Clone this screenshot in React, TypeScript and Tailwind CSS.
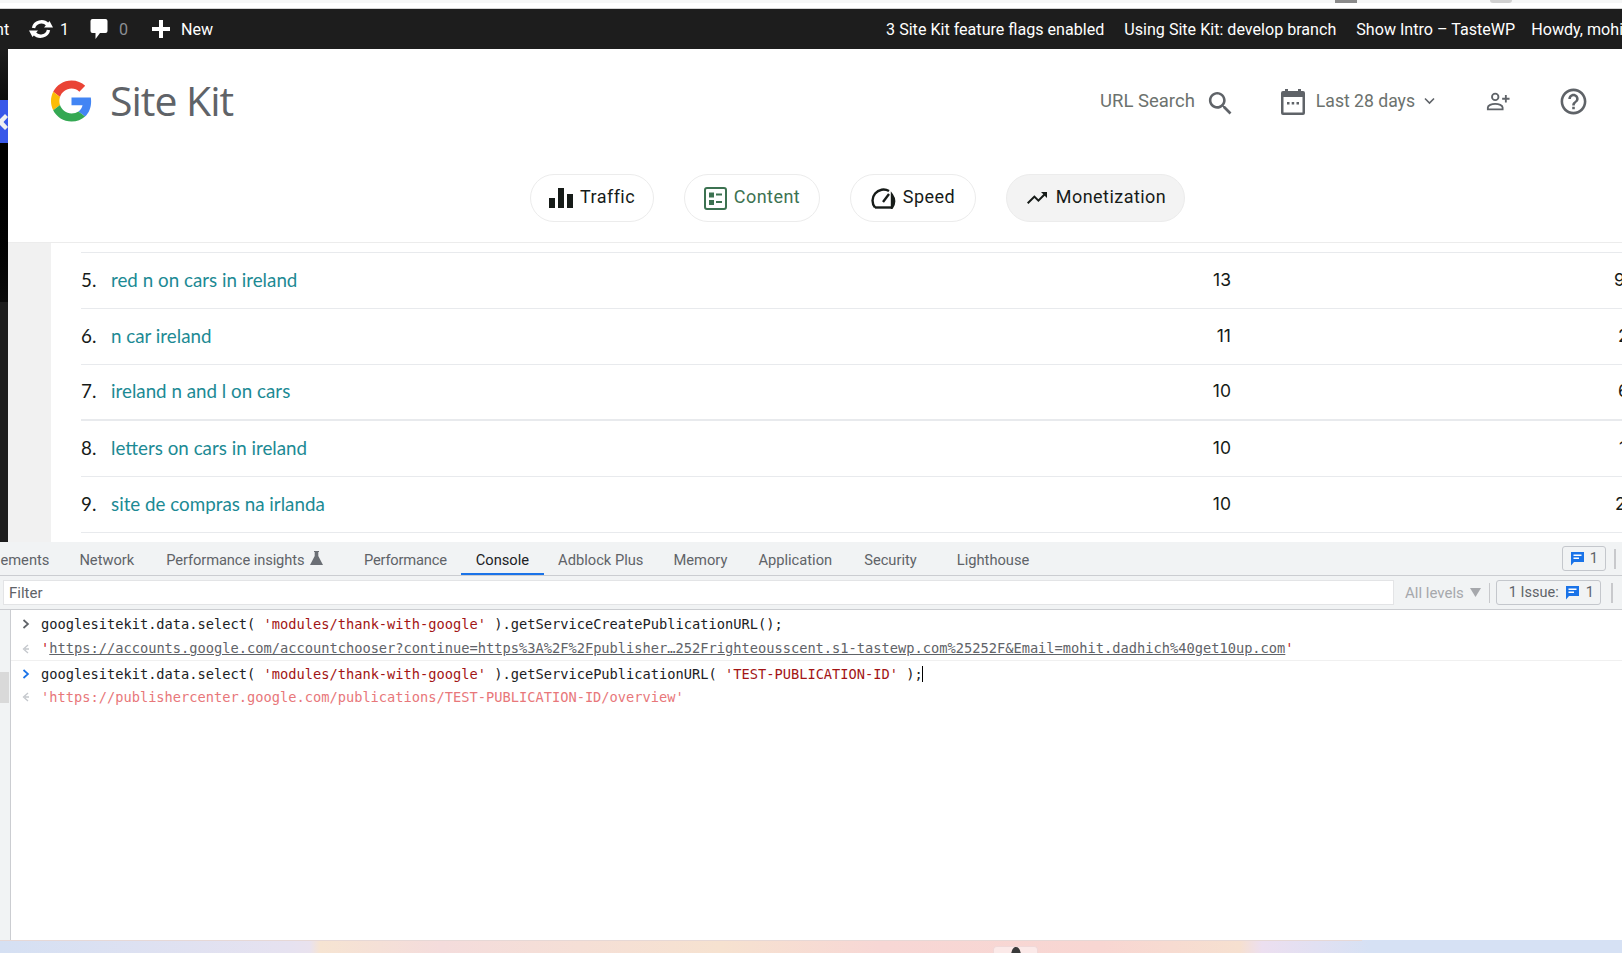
const rows = [
  { n: '5.', label: 'red n on cars in ireland', clicks: '13', extra: '9', offset: 'pl-[383px]', line: 'border-b' },
  { n: '6.', label: 'n car ireland', clicks: '11', extra: '2', offset: 'pl-[387px]', line: 'border-b' },
  { n: '7.', label: 'ireland n and l on cars', clicks: '10', extra: '6', offset: 'pl-[387px]', line: 'border-b-2' },
  { n: '8.', label: 'letters on cars in ireland', clicks: '10', extra: '1', offset: 'pl-[388px]', line: 'border-b' },
  { n: '9.', label: 'site de compras na irlanda', clicks: '10', extra: '2', offset: 'pl-[384px]', line: 'border-b' },
];

const GoogleG = () => (
  <svg width="41" height="42" viewBox="0 0 48 48">
    <path fill="#EA4335" d="M24 9.5c3.54 0 6.71 1.22 9.21 3.6l6.85-6.85C35.9 2.38 30.47 0 24 0 14.62 0 6.51 5.38 2.56 13.22l7.98 6.19C12.43 13.72 17.74 9.5 24 9.5z" />
    <path fill="#4285F4" d="M46.98 24.55c0-1.57-.15-3.09-.38-4.55H24v9.02h12.94c-.58 2.96-2.26 5.48-4.78 7.18l7.73 6c4.51-4.18 7.09-10.36 7.09-17.65z" />
    <path fill="#FBBC05" d="M10.53 28.59c-.48-1.45-.76-2.99-.76-4.59s.27-3.14.76-4.59l-7.98-6.19C.92 16.46 0 20.12 0 24c0 3.88.92 7.54 2.56 10.78l7.97-6.19z" />
    <path fill="#34A853" d="M24 48c6.48 0 11.93-2.13 15.89-5.81l-7.73-6c-2.15 1.45-4.92 2.3-8.16 2.3-6.26 0-11.57-4.22-13.47-9.91l-7.98 6.19C6.51 42.62 14.62 48 24 48z" />
  </svg>
);

const MessageIcon = () => (
  <svg width="15" height="15" viewBox="0 0 15 15">
    <path fill="#1a73e8" d="M1 1h13v10H4l-3 3.5z" />
    <path fill="#fff" d="M3.5 3.5h8v1.4h-8zM3.5 6.5h5.5v1.4H3.5z" />
  </svg>
);

const Chevron = ({ color }: { color: string }) => (
  <svg width="8" height="10" viewBox="0 0 8 10" fill="none" stroke={color} strokeWidth="1.7">
    <path d="M1.5 1l4.5 4-4.5 4" />
  </svg>
);

const BackArrow = () => (
  <svg width="8" height="10" viewBox="0 0 8 10" fill="none" stroke="#c4c7cc" strokeWidth="1.3">
    <path d="M6 1L1.5 5 6 9M3 5h4" />
  </svg>
);

const Chip = ({ label, icon, width, active, green }: { label: string; icon: React.ReactNode; width: string; active?: boolean; green?: boolean }) => (
  <div
    className={`flex h-[48px] items-center justify-center gap-[7px] rounded-full border border-[#ececec] text-[18px] tracking-[0.45px] ${width} ${
      active ? 'bg-[#f3f3f3]' : 'bg-white'
    } ${green ? 'text-[#3c7251]' : 'text-[#161b18]'}`}
  >
    {icon}
    <span className="mb-[3px]">{label}</span>
  </div>
);

const Tab = ({ label, active, className = '' }: { label: string; active?: boolean; className?: string }) => (
  <div
    className={`flex h-full items-center border-b-2 px-[14.5px] pt-[5px] ${active ? 'border-[#1a73e8] text-[#202124]' : 'border-transparent text-[#5f6368]'} ${className}`}
  >
    {label}
  </div>
);

export default function App() {
  return (
    <div className="flex h-[953px] w-[1622px] flex-col overflow-hidden bg-white font-['Roboto',sans-serif]">
      {/* browser edge */}
      <div className="flex h-[3px] shrink-0 bg-[#f6f7f7]">
        <div className="ml-[1335px] h-[3px] w-[22px] bg-[#8a8a8a]" />
        <div className="ml-[133px] h-[3px] w-[22px] rounded-b-full bg-[#d0d0d0]" />
      </div>
      <div className="h-[6px] shrink-0 border-b border-[#d4d4d4] bg-white" />

      {/* wp admin bar */}
      <div className="flex h-[40px] shrink-0 items-center whitespace-nowrap bg-[#1d1d1d] pt-[3px] text-[16.1px] text-white">
        <span className="ml-[-5px] w-[34px] shrink-0">nt</span>
        <svg className="mb-[3px] shrink-0" width="24" height="22" viewBox="0 0 24 22" fill="none" stroke="#fff" strokeWidth="3.4">
          <path d="M4.5 10a8 7.5 0 0 1 14-3.5" />
          <path d="M19.5 12a8 7.5 0 0 1-14 3.5" />
          <path fill="#fff" stroke="none" d="M15 9.500h9L20.500 3zM9 12.500H0L3.500 19z" />
        </svg>
        <span className="ml-[7px] w-[30px] shrink-0">1</span>
        <svg className="mb-[3px] shrink-0" width="18" height="22" viewBox="0 0 18 22">
          <path fill="#fff" d="M2.5 1h13A2 2 0 0 1 17.500 3v10a2 2 0 0 1-2 2H10l-4.500 6v-6H2.500a2 2 0 0 1-2-2V3a2 2 0 0 1 2-2z" />
        </svg>
        <span className="ml-[11px] w-[33px] shrink-0 text-[#8c8f94]">0</span>
        <svg className="mb-[3px] shrink-0" width="18" height="18" viewBox="0 0 18 18">
          <path fill="#fff" d="M7 0h4v7h7v4h-7v7H7v-7H0V7h7z" />
        </svg>
        <span className="ml-[11px] shrink-0">New</span>
        <div className="ml-[673px] flex shrink-0 items-center gap-[20px]">
          <span>3 Site Kit feature flags enabled</span>
          <span>Using Site Kit: develop branch</span>
          <span className="mr-[-4px]">Show Intro – TasteWP</span>
          <span>Howdy, mohit</span>
        </div>
      </div>

      <div className="flex h-[493px] shrink-0">
        {/* wp sidebar edge */}
        <div className="flex w-[8px] shrink-0 flex-col">
          <div className="h-[51px] bg-gradient-to-b from-[#1d1d1d] to-[#0d0d0d]" />
          <div className="flex h-[43px] items-center bg-[#3858e9]">
            <svg width="8" height="20" viewBox="0 0 8 20">
              <path fill="#f0f0f1" d="M5 2L8 5 3.500 10 8 15 5 18-3 10z" />
            </svg>
          </div>
          <div className="h-[159px] bg-gradient-to-b from-black to-[#0a0a0a]" />
          <div className="flex-1 bg-[#1d1d1d]" />
        </div>

        <div className="flex min-w-0 flex-1 flex-col">
          {/* site kit header */}
          <div className="flex h-[106px] shrink-0 items-center pb-[3px] pl-[43px] pr-[33px]">
            <GoogleG />
            <span className="ml-[18px] text-[41px] tracking-[-1px] text-[#5f6368] font-['Open_Sans',sans-serif]">Site Kit</span>
            <div className="ml-auto mt-[2px] flex items-center text-[#6c726e]">
              <span className="mt-[1px] text-[18.5px]">URL Search</span>
              <svg className="ml-[10px] mt-[3px]" width="31" height="31" viewBox="0 0 24 24" fill="#5f6368">
                <path d="M15.500 14h-.79l-.28-.27C15.410 12.590 16 11.110 16 9.500 16 5.910 13.090 3 9.500 3S3 5.910 3 9.500 5.910 16 9.500 16c1.610 0 3.090-.59 4.230-1.570l.27.28v.79l5 4.990L20.490 19l-4.990-5zm-6 0C7.010 14 5 11.990 5 9.500S7.010 5 9.500 5 14 7.010 14 9.500 11.990 14 9.500 14z" />
              </svg>
              <svg className="ml-[45px]" width="24" height="26" viewBox="0 0 24 26">
                <path fill="#5f6368" d="M4 0h3v2h10V0h3v2h2a2 2 0 0 1 2 2v20a2 2 0 0 1-2 2H2a2 2 0 0 1-2-2V4a2 2 0 0 1 2-2h2z" />
                <path fill="#fff" d="M2.500 8h19v15.500h-19z" />
                <path fill="#5f6368" d="M6 13h2.500v2.500H6zM10.700 13h2.500v2.500h-2.500zM15.500 13H18v2.500h-2.500z" />
              </svg>
              <span className="mb-[1px] ml-[11px] text-[17.6px]">Last 28 days</span>
              <svg className="ml-[8px]" width="13" height="9" viewBox="0 0 13 9" fill="none" stroke="#5f6368" strokeWidth="1.600">
                <path d="M2 1.500l4.500 4.500 4.500-4.500" />
              </svg>
              <svg className="ml-[50px]" width="24" height="19" viewBox="0 0 26 20" fill="none" stroke="#5f6368" strokeWidth="2">
                <circle cx="10" cy="5" r="3.500" />
                <path d="M2 18.500v-2c0-2.500 4-4 8-4s8 1.500 8 4v2z" />
                <path d="M21.500 3v8M17.500 7h8" />
              </svg>
              <svg className="ml-[48px]" width="31" height="31" viewBox="0 0 24 24" fill="#5f6368">
                <path d="M11 18h2v-2h-2v2zm1-16C6.480 2 2 6.480 2 12s4.480 10 10 10 10-4.480 10-10S17.520 2 12 2zm0 18c-4.410 0-8-3.590-8-8s3.590-8 8-8 8 3.590 8 8-3.590 8-8 8zm0-14c-2.210 0-4 1.790-4 4h2c0-1.100.9-2 2-2s2 .9 2 2c0 2-3 1.750-3 5h2c0-2.250 3-2.500 3-5 0-2.210-1.790-4-4-4z" />
              </svg>
            </div>
          </div>

          {/* nav chips */}
          <div className="flex h-[88px] shrink-0 gap-[30px] border-b border-[#ececec] pl-[522px] pt-[19px]">
            <Chip
              label="Traffic"
              width="w-[124px]"
              icon={
                <svg width="24" height="20" viewBox="0 0 24 20" fill="#161b18">
                  <path d="M0 10h6v10H0zM9 0h6v20H9zM18 6h6v14h-6z" />
                </svg>
              }
            />
            <Chip
              green
              label="Content"
              width="w-[136px]"
              icon={
                <svg width="23" height="23" viewBox="0 0 23 23">
                  <rect x="1" y="1" width="21" height="21" rx="2" fill="#fff" stroke="#3c7251" strokeWidth="2" />
                  <path fill="#3c7251" d="M5 5.500h5v5H5zM12 6.500h6v2h-6zM5 13h5v5H5zM12 14h6v2h-6z" />
                </svg>
              }
            />
            <Chip
              label="Speed"
              width="w-[126px]"
              icon={
                <svg width="25" height="21" viewBox="0 0 25 21" fill="none" stroke="#161b18" strokeWidth="2.400">
                  <path d="M4 19.500A11 11 0 0 1 18 3M21 7a11 11 0 0 1 0 12.500z" />
                  <path d="M4 19.500h17" />
                  <path d="M12 14l6-8" />
                </svg>
              }
            />
            <Chip
              active
              label="Monetization"
              width="w-[179px]"
              icon={
                <svg width="24" height="24" viewBox="0 0 24 24" fill="#161b18">
                  <path d="M16 6l2.290 2.290-4.880 4.880-4-4L2 16.590 3.410 18l6-6 4 4 6.300-6.290L22 12V6z" />
                </svg>
              }
            />
          </div>

          {/* search console table */}
          <div className="min-h-0 flex-1 bg-[#f1f1f1] pl-[43px]">
            <div className="h-full bg-white pl-[30px] pt-[9px] text-[18.8px] text-[#161b18] font-['Lato',sans-serif]">
              <div className="border-t border-[#e8eaed]">
                {rows.map((row) => (
                  <div key={row.n} className={`flex h-[56px] items-center whitespace-nowrap border-[#e8eaed] pb-[1px] ${row.line}`}>
                    <span className="w-[30px]">{row.n}</span>
                    <span className="text-[#1c8a94]">{row.label}</span>
                    <span className="ml-auto w-[40px] shrink-0 text-right text-[17.5px] font-['Inter',sans-serif]">{row.clicks}</span>
                    <span className={`${row.offset} w-[391px] shrink-0 text-[17.5px] font-['Inter',sans-serif]`}>{row.extra}</span>
                  </div>
                ))}
              </div>
            </div>
          </div>
        </div>
      </div>

      {/* devtools */}
      <div className="flex min-h-0 flex-1 flex-col">
        <div className="flex h-[34px] shrink-0 items-center whitespace-nowrap border-b border-[#cbcdd1] bg-[#f1f3f4] text-[14.7px]">
          <div className="ml-[-26px] flex h-full items-center">
            <Tab label="Elements" />
            <Tab label="Network" className="ml-[1px]" />
            <div className="flex h-full items-center pl-[17.5px] pr-[26px] pt-[3px] tracking-[-0.1px] text-[#5f6368]">
              Performance insights
              <svg className="mb-[5px] ml-[6px]" width="13" height="14" viewBox="0 0 13 14" fill="#6b6f75">
                <path d="M4 0h5v1H8.300v4L13 14H0l4.700-9V1H4z" />
              </svg>
            </div>
            <Tab label="Performance" className="tracking-[-0.2px]" />
            <Tab label="Console" active />
            <Tab label="Adblock Plus" />
            <Tab label="Memory" className="ml-[1px]" />
            <Tab label="Application" className="ml-[2px]" />
            <Tab label="Security" className="ml-[3px] mr-[11px]" />
            <Tab label="Lighthouse" />
          </div>
          <div className="ml-auto mr-[6px] flex items-center gap-[8px]">
            <div className="flex h-[25px] w-[44px] items-center justify-center gap-[5px] rounded-[3px] border border-[#c4c7cc] text-[#5f6368]">
              <MessageIcon />1
            </div>
            <div className="h-[20px] w-[2px] bg-[#c8c9cc]" />
          </div>
        </div>

        <div className="flex h-[34px] shrink-0 items-center whitespace-nowrap border-b border-[#cbcdd1] bg-[#f1f3f4] pl-[3px] text-[15px]">
          <div className="flex h-[25px] w-[1391px] items-center border border-[#e3e4e6] bg-white pl-[5px] pt-[2px] text-[#5f6368]">Filter</div>
          <span className="ml-[11px] pt-[1px] text-[#a6a8ac]">All levels</span>
          <svg className="ml-[6px]" width="11" height="9" viewBox="0 0 11 9" fill="#a6a8ac">
            <path d="M0 0h11L5.500 9z" />
          </svg>
          <div className="ml-[8px] h-[20px] w-px bg-[#c8c9cc]" />
          <div className="ml-[6px] flex h-[25px] w-[105px] items-center justify-end gap-[6px] rounded-[3px] border border-[#c4c7cc] pr-[6px] text-[14.5px] text-[#5f6368]">
            1 Issue:
            <span className="flex items-center gap-[6px]">
              <MessageIcon />1
            </span>
          </div>
          <div className="ml-[10px] h-[20px] w-[2px] bg-[#c8c9cc]" />
        </div>

        <div className="flex min-h-0 flex-1">
          <div className="w-[11px] shrink-0 border-r border-[#cbcdd1] bg-[#f1f3f4] pt-[62px]">
            <div className="h-[31px] w-[9px] bg-[#d9d9d9]" />
          </div>
          <div className="min-w-0 flex-1 whitespace-pre pt-[3px] text-[13.700px] font-['DejaVu_Sans_Mono','Liberation_Mono',monospace]">
            <div className="flex h-[24px] items-center pb-[2px]">
              <span className="flex w-[30px] justify-center pr-[1px]"><Chevron color="#5f6368" /></span>
              <span className="text-[#202124]">googlesitekit.data.select( <span className="text-[#a31515]">'modules/thank-with-google'</span> ).getServiceCreatePublicationURL();</span>
            </div>
            <div className="flex h-[24px] items-center border-b border-[#f0f0f0]">
              <span className="flex w-[30px] justify-center pr-[1px]"><BackArrow /></span>
              <span className="text-[#c5221f]">'<span className="text-[#5f6368] underline">https://accounts.google.com/accountchooser?continue=https%3A%2F%2Fpublisher…252Frighteousscent.s1-tastewp.com%25252F&amp;Email=mohit.dadhich%40get10up.com</span>'</span>
            </div>
            <div className="flex h-[26px] items-center">
              <span className="flex w-[30px] justify-center pr-[1px]"><Chevron color="#1a73e8" /></span>
              <span className="text-[#202124]">googlesitekit.data.select( <span className="text-[#a31515]">'modules/thank-with-google'</span> ).getServicePublicationURL( <span className="text-[#a31515]">'TEST-PUBLICATION-ID'</span> );</span>
              <span className="ml-[-1px] h-[16px] w-px bg-black" />
            </div>
            <div className="flex h-[20px] items-center">
              <span className="flex w-[30px] justify-center pr-[1px]"><BackArrow /></span>
              <span className="text-[#e8777a]">'https://publishercenter.google.com/publications/TEST-PUBLICATION-ID/overview'</span>
            </div>
          </div>
        </div>
      </div>

      {/* taskbar wallpaper */}
      <div className="flex h-[13px] shrink-0 flex-col bg-[linear-gradient(90deg,#d5e0f3_0px,#e6e2f0_290px,#e9e2ee_310px,#f6e4d2_320px,#f4dcdc_440px,#f6e2d0_720px,#f7d7d5_880px,#f8d6d2_1100px,#f6e0d0_1240px,#ecdff0_1262px,#d6e1f4_1370px,#d6e1f4_1622px)]">
        <div className="h-px w-[1362px] shrink-0 bg-[#e6d8d6]" />
        <div className="flex flex-1 pl-[993px]">
          <div className="mt-[5px] flex h-[7px] w-[45px] items-start justify-center rounded-t-[4px] border border-b-0 border-[#f0d8d8] bg-[#fbe9e8]">
            <svg width="14" height="7" viewBox="0 0 14 7" fill="#3a3a3a">
              <path d="M7 0c3 0 4 3 5 7H2c1-4 2-7 5-7z" />
            </svg>
          </div>
        </div>
      </div>
    </div>
  );
}
